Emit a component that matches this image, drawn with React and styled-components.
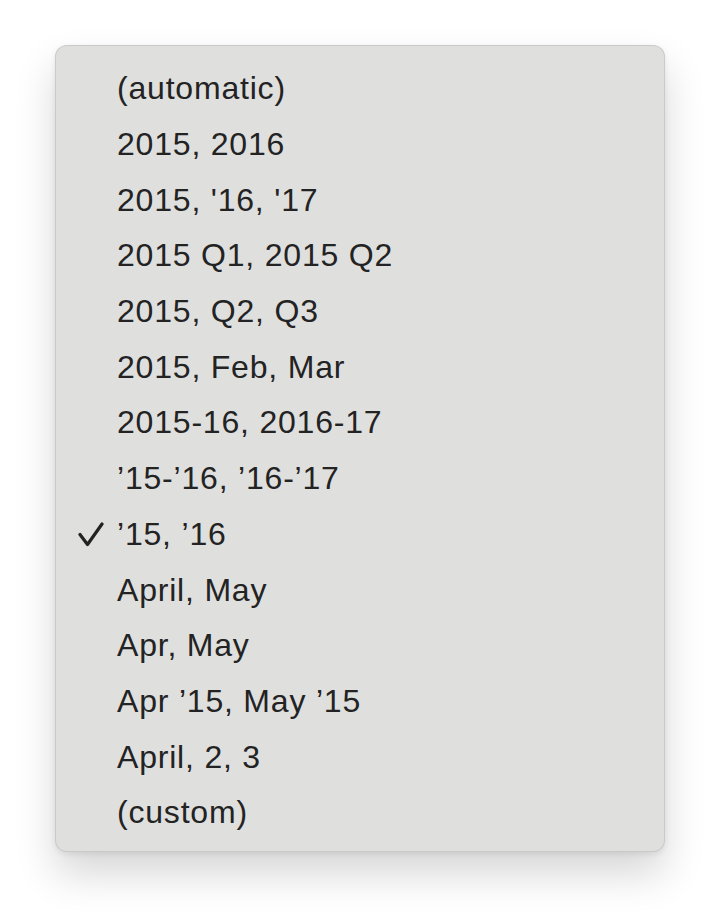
import styled, { createGlobalStyle } from "styled-components";

const items = [
  { label: "(automatic)" },
  { label: "2015, 2016" },
  { label: "2015, '16, '17" },
  { label: "2015 Q1, 2015 Q2" },
  { label: "2015, Q2, Q3" },
  { label: "2015, Feb, Mar" },
  { label: "2015-16, 2016-17" },
  { label: "\u201915-\u201916, \u201916-\u201917" },
  { label: "\u201915, \u201916", checked: true },
  { label: "April, May" },
  { label: "Apr, May" },
  { label: "Apr \u201915, May \u201915" },
  { label: "April, 2, 3" },
  { label: "(custom)" },
];

const App = () => {
  return (
    <>
      <GlobalStyle />
      <Page>
        <Menu>
          {items.map((item) => (
            <Item key={item.label}>
              <Gutter>
                {item.checked && (
                  <svg width="26" height="26" viewBox="0 0 26 26">
                    <path
                      d="M2 12.5 L9.5 22.5 L24 2"
                      fill="none"
                      stroke="#222"
                      strokeWidth="3.2"
                      strokeLinecap="round"
                      strokeLinejoin="round"
                    />
                  </svg>
                )}
              </Gutter>
              <Label>{item.label}</Label>
            </Item>
          ))}
        </Menu>
      </Page>
    </>
  );
};

export default App;

const GlobalStyle = createGlobalStyle`
  html, body {
    margin: 0;
    background: #ffffff;
  }
`;

const Page = styled.div`
  width: 720px;
  height: 916px;
  padding: 45px 55px 0;
  box-sizing: border-box;
  font-family: "Liberation Sans", Arial, sans-serif;
`;

const Menu = styled.div`
  width: 610px;
  box-sizing: border-box;
  padding: 15px 0 10px;
  background: #dfdfde;
  border: 1px solid rgba(0, 0, 0, 0.09);
  border-radius: 12px;
  box-shadow: 0 22px 40px rgba(0, 0, 0, 0.16), 0 2px 6px rgba(0, 0, 0, 0.08);
`;

const Item = styled.div`
  display: grid;
  grid-template-columns: 61px 1fr;
  align-items: center;
  height: 55.7px;
`;

const Gutter = styled.div`
  display: flex;
  justify-content: flex-end;
  padding-right: 13px;
  svg {
    display: block;
    margin-top: 1px;
  }
`;

const Label = styled.span`
  font-size: 32px;
  letter-spacing: 0.8px;
  color: #232323;
  white-space: nowrap;
`;
